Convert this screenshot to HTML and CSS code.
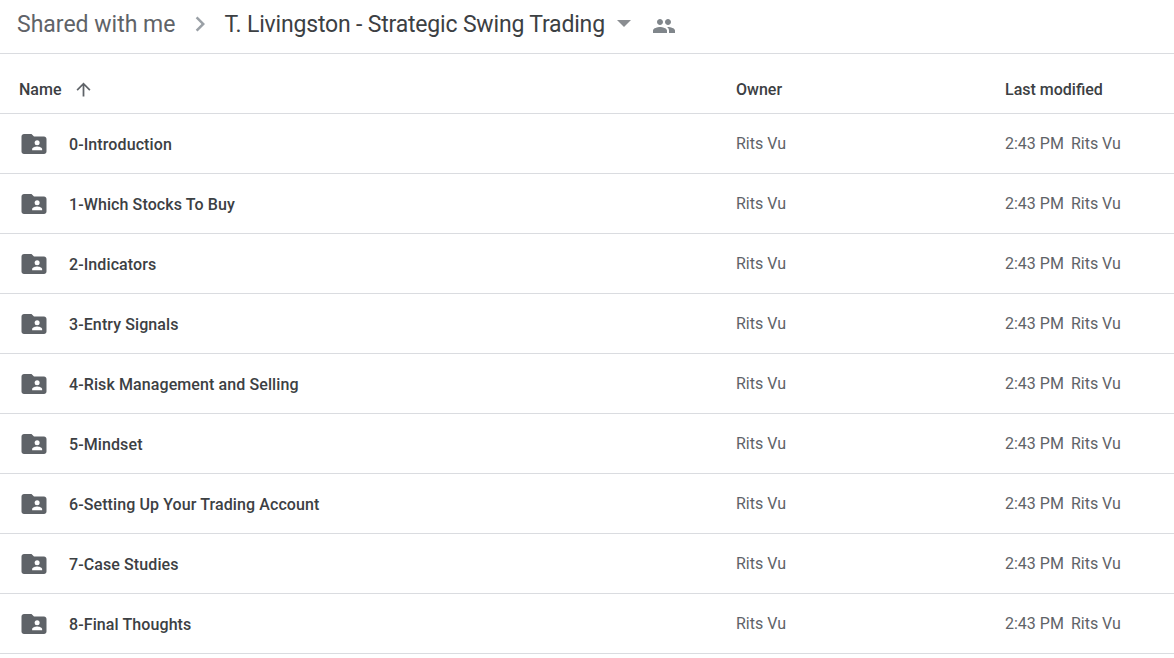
FILE: index.html
```html
<!DOCTYPE html>
<html lang="en">
<head>
  <meta charset="UTF-8" />
  <title>T. Livingston - Strategic Swing Trading</title>
  <link rel="stylesheet" href="styles.css">
</head>
<body>

<svg class="defs" width="0" height="0">
  <symbol id="folder" viewBox="0 0 24 24">
    <path fill="#5f6368" d="M10 4H4c-1.100 0-2 .9-2 2v12c0 1.100.9 2 2 2h16c1.100 0 2-.9 2-2V8c0-1.100-.9-2-2-2h-8l-2-2z"/>
    <circle fill="#fff" cx="14.500" cy="11" r="2"/>
    <path fill="#fff" d="M10.500 17v-1c0-1.300 2.700-2 4-2s4 .7 4 2v1h-8z"/>
  </symbol>
</svg>

<div class="breadcrumb">
  <span class="crumb">Shared with me</span>
  <svg class="chevron" width="30" height="30" viewBox="0 0 24 24"><path fill="#9aa0a6" d="M8.590 16.590 13.170 12 8.590 7.410 10 6l6 6-6 6z"/></svg>
  <span class="crumb current">T. Livingston - Strategic Swing Trading</span>
  <span class="caret"></span>
  <svg class="people" width="24" height="24" viewBox="0 0 24 24"><path fill="#80868b" d="M16 11c1.660 0 2.990-1.340 2.990-3S17.660 5 16 5s-3 1.340-3 3 1.340 3 3 3zm-8 0c1.660 0 2.990-1.340 2.990-3S9.660 5 8 5 5 6.340 5 8s1.340 3 3 3zm0 2c-2.330 0-7 1.170-7 3.500V19h14v-2.500C15 14.170 10.330 13 8 13zm8 0c-.29 0-.62.020-.97.050 1.160.84 1.970 1.970 1.970 3.450V19h6v-2.500c0-2.330-4.670-3.500-7-3.500z"/></svg>
</div>

<div class="row head">
  <div class="col-name">
    <span>Name</span>
    <svg class="sort" width="21" height="21" viewBox="0 0 24 24"><path fill="#5f6368" d="M4 12l1.410 1.410L11 7.830V20h2V7.830l5.580 5.590L20 12l-8-8-8 8z"/></svg>
  </div>
  <div class="col-owner">Owner</div>
  <div class="col-date">Last modified</div>
</div>

<div class="row item">
  <div class="col-name"><svg class="folder" width="30" height="30"><use href="#folder"/></svg><span class="name">0-Introduction</span></div>
  <div class="col-owner">Rits Vu</div>
  <div class="col-date"><span class="time">2:43 PM</span><span>Rits Vu</span></div>
</div>
<div class="row item">
  <div class="col-name"><svg class="folder" width="30" height="30"><use href="#folder"/></svg><span class="name">1-Which Stocks To Buy</span></div>
  <div class="col-owner">Rits Vu</div>
  <div class="col-date"><span class="time">2:43 PM</span><span>Rits Vu</span></div>
</div>
<div class="row item">
  <div class="col-name"><svg class="folder" width="30" height="30"><use href="#folder"/></svg><span class="name">2-Indicators</span></div>
  <div class="col-owner">Rits Vu</div>
  <div class="col-date"><span class="time">2:43 PM</span><span>Rits Vu</span></div>
</div>
<div class="row item">
  <div class="col-name"><svg class="folder" width="30" height="30"><use href="#folder"/></svg><span class="name">3-Entry Signals</span></div>
  <div class="col-owner">Rits Vu</div>
  <div class="col-date"><span class="time">2:43 PM</span><span>Rits Vu</span></div>
</div>
<div class="row item">
  <div class="col-name"><svg class="folder" width="30" height="30"><use href="#folder"/></svg><span class="name">4-Risk Management and Selling</span></div>
  <div class="col-owner">Rits Vu</div>
  <div class="col-date"><span class="time">2:43 PM</span><span>Rits Vu</span></div>
</div>
<div class="row item">
  <div class="col-name"><svg class="folder" width="30" height="30"><use href="#folder"/></svg><span class="name">5-Mindset</span></div>
  <div class="col-owner">Rits Vu</div>
  <div class="col-date"><span class="time">2:43 PM</span><span>Rits Vu</span></div>
</div>
<div class="row item">
  <div class="col-name"><svg class="folder" width="30" height="30"><use href="#folder"/></svg><span class="name">6-Setting Up Your Trading Account</span></div>
  <div class="col-owner">Rits Vu</div>
  <div class="col-date"><span class="time">2:43 PM</span><span>Rits Vu</span></div>
</div>
<div class="row item">
  <div class="col-name"><svg class="folder" width="30" height="30"><use href="#folder"/></svg><span class="name">7-Case Studies</span></div>
  <div class="col-owner">Rits Vu</div>
  <div class="col-date"><span class="time">2:43 PM</span><span>Rits Vu</span></div>
</div>
<div class="row item">
  <div class="col-name"><svg class="folder" width="30" height="30"><use href="#folder"/></svg><span class="name">8-Final Thoughts</span></div>
  <div class="col-owner">Rits Vu</div>
  <div class="col-date"><span class="time">2:43 PM</span><span>Rits Vu</span></div>
</div>

</body>
</html>
```

FILE: styles.css
```css
html, body {
  margin: 0;
  padding: 0;
  background: #fff;
  overflow: hidden;
}
body {
  font-family: Roboto, "Liberation Sans", sans-serif;
  color: #3c4043;
}
.defs {
  display: block;
  height: 0;
}
.breadcrumb {
  display: flex;
  align-items: center;
  height: 53px;
  padding-left: 17px;
  border-bottom: 1px solid #dadce0;
}
.crumb {
  font-size: 23px;
  color: #5f6368;
  position: relative;
  top: -2px;
}
.current {
  color: #3c4043;
  letter-spacing: -.18px;
}
.chevron {
  margin: 0 9px 0 10px;
  position: relative;
  top: -3px;
}
.caret {
  width: 0;
  height: 0;
  margin: 0 0 0 12px;
  border-left: 7px solid transparent;
  border-right: 7px solid transparent;
  border-top: 7px solid #8a8d91;
  position: relative;
  top: -3px;
}
.people {
  margin-left: 21px;
  position: relative;
  top: -1px;
}
.row {
  display: flex;
  align-items: center;
  border-bottom: 1px solid #dadce0;
  font-size: 16px;
}
.head {
  height: 47px;
  padding-top: 12px;
  font-weight: 500;
  color: #3c4043;
}
.item {
  height: 59px;
}
.col-name {
  display: flex;
  align-items: center;
  width: 736px;
  flex: none;
  padding-left: 19px;
  box-sizing: border-box;
}
.name {
  font-weight: 500;
  letter-spacing: .1px;
  position: relative;
  top: 1px;
}
.col-owner {
  width: 269px;
  flex: none;
}
.item .col-owner, .item .col-date {
  color: #5f6368;
}
.col-date {
  display: flex;
}
.time {
  margin-right: 7px;
}
.sort {
  margin-left: 12px;
}
.folder {
  margin-right: 20px;
  flex: none;
}
```
